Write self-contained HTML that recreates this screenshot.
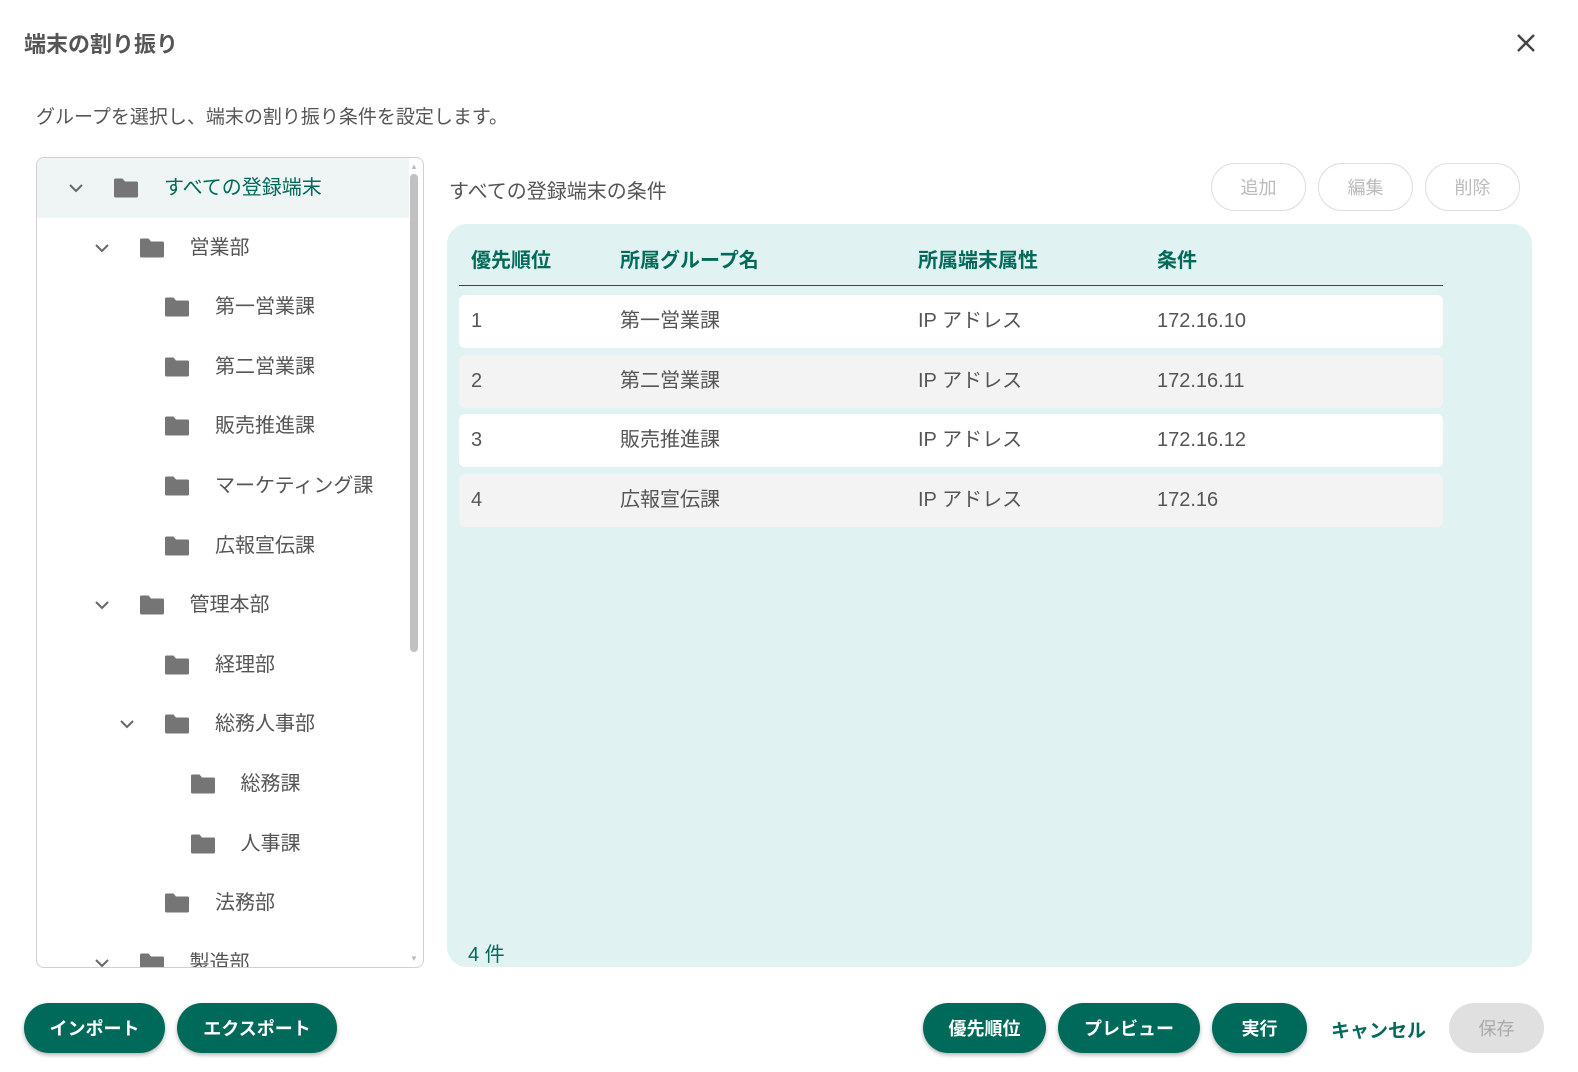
<!DOCTYPE html><html><head><meta charset="utf-8"><style>
*{box-sizing:border-box;margin:0;padding:0}
body{width:1578px;height:1072px;background:#fff;font-family:"Liberation Sans","Noto Sans CJK JP",sans-serif;position:relative;overflow:hidden;color:#555}
.a{position:absolute;white-space:nowrap}
.tree{position:absolute;left:36px;top:157px;width:388px;height:811px;border:1px solid #d0d0d0;border-radius:8px;overflow:hidden}
.row{position:absolute;left:0;width:372px;height:60px}
.row .t{position:absolute;top:0;line-height:60px;font-size:20px;color:#555}
.chev{position:absolute;top:20px;width:20px;height:20px}
.fold{position:absolute;top:20px;width:26px;height:20px}
.btn{position:absolute;height:50px;border-radius:25px;background:#006a5a;color:#fff;font-weight:bold;font-size:18px;display:flex;align-items:center;justify-content:center;box-shadow:0 2px 4px rgba(0,0,0,.3)}
.ob{position:absolute;top:163px;width:95px;height:48px;border:1px solid #ddd;border-radius:24px;color:#bbb;font-size:18px;display:flex;align-items:center;justify-content:center}
.tr{position:absolute;left:459px;width:984px;height:53px;border-radius:6px;font-size:20px;color:#555}
.tr span{position:absolute;top:0;line-height:53px}
.th{position:absolute;top:244px;font-size:20px;font-weight:bold;color:#006a5a}
</style></head><body>
<div class="a" style="left:24px;top:27px;font-size:22px;font-weight:bold;color:#555">端末の割り振り</div>
<svg class="a" style="left:1515px;top:32px" width="22" height="22" viewBox="0 0 22 22"><path d="M3 3L19 19M19 3L3 19" stroke="#444" stroke-width="2.4"/></svg>
<div class="a" style="left:36px;top:102px;font-size:19px;color:#555">グループを選択し、端末の割り振り条件を設定します。</div>
<div class="tree">
<div style="position:absolute;left:0;top:0;width:372px;height:60px;background:#eef5f4"></div>
<div style="position:absolute;left:373px;top:16px;width:8px;height:478px;background:#c1c1c1;border-radius:4px"></div>
<div style="position:absolute;left:373px;top:4px;font-size:8px;color:#bbb">▲</div>
<div style="position:absolute;left:373px;top:796px;font-size:8px;color:#bbb">▼</div>
</div>
<div class="a" style="left:449px;top:175px;font-size:20px;color:#555">すべての登録端末の条件</div>
<div class="ob" style="left:1211px">追加</div><div class="ob" style="left:1318px">編集</div><div class="ob" style="left:1425px">削除</div>
<div class="a" style="left:447px;top:224px;width:1085px;height:743px;background:#e0f2f1;border-radius:20px"></div>
<div class="th" style="left:471px">優先順位</div><div class="th" style="left:620px">所属グループ名</div><div class="th" style="left:918px">所属端末属性</div><div class="th" style="left:1157px">条件</div>
<div class="a" style="left:459px;top:285px;width:984px;height:1px;background:#444"></div>
<div class="tr" style="top:295px;background:#fff"><span style="left:12px">1</span><span style="left:161px">第一営業課</span><span style="left:459px">IP アドレス</span><span style="left:698px">172.16.10</span></div>
<div class="tr" style="top:355px;background:#f3f3f3"><span style="left:12px">2</span><span style="left:161px">第二営業課</span><span style="left:459px">IP アドレス</span><span style="left:698px">172.16.11</span></div>
<div class="tr" style="top:414px;background:#fff"><span style="left:12px">3</span><span style="left:161px">販売推進課</span><span style="left:459px">IP アドレス</span><span style="left:698px">172.16.12</span></div>
<div class="tr" style="top:474px;background:#f3f3f3"><span style="left:12px">4</span><span style="left:161px">広報宣伝課</span><span style="left:459px">IP アドレス</span><span style="left:698px">172.16</span></div>
<div class="a" style="left:468px;top:938px;font-size:20px;color:#006a5a">4 件</div>
<div class="btn" style="left:24px;top:1003px;width:141px">インポート</div>
<div class="btn" style="left:177px;top:1003px;width:160px">エクスポート</div>
<div class="btn" style="left:923px;top:1003px;width:123px">優先順位</div>
<div class="btn" style="left:1058px;top:1003px;width:142px">プレビュー</div>
<div class="btn" style="left:1212px;top:1003px;width:95px">実行</div>
<div class="a" style="left:1331px;top:1016px;font-size:19px;font-weight:bold;color:#006a5a">キャンセル</div>
<div class="btn" style="left:1449px;top:1003px;width:95px;background:#e0e0e0;color:#aaa;box-shadow:none;font-weight:normal">保存</div>
<script>
var items=[[0,1,"すべての登録端末"],[1,1,"営業部"],[2,0,"第一営業課"],[2,0,"第二営業課"],[2,0,"販売推進課"],[2,0,"マーケティング課"],[2,0,"広報宣伝課"],[1,1,"管理本部"],[2,0,"経理部"],[2,1,"総務人事部"],[3,0,"総務課"],[3,0,"人事課"],[2,0,"法務部"],[1,1,"製造部"]];
var t=document.querySelector('.tree'),h='';
items.forEach(function(it,i){var l=it[0],x=26+25.5*l;h+='<div class="row" style="top:'+(i*59.6)+'px">';
if(it[1])h+='<svg class="chev" style="left:'+(x+3)+'px" viewBox="0 0 20 20"><path d="M4 7l6 6 6-6" fill="none" stroke="#666" stroke-width="2"/></svg>';
h+='<svg class="fold" style="left:'+(x+50)+'px" viewBox="0 0 26 20"><path d="M1 2a1.5 1.5 0 0 1 1.5-1.5h7l2.5 3h11.5a1.5 1.5 0 0 1 1.5 1.5v13a1.5 1.5 0 0 1-1.5 1.5h-21a1.5 1.5 0 0 1-1.5-1.5z" fill="#757575"/></svg>';
h+='<div class="t" style="left:'+(x+101)+'px;'+(i==0?'color:#006a5a':'')+'">'+it[2]+'</div></div>';});
t.insertAdjacentHTML('beforeend',h);
</script>
</body></html>
